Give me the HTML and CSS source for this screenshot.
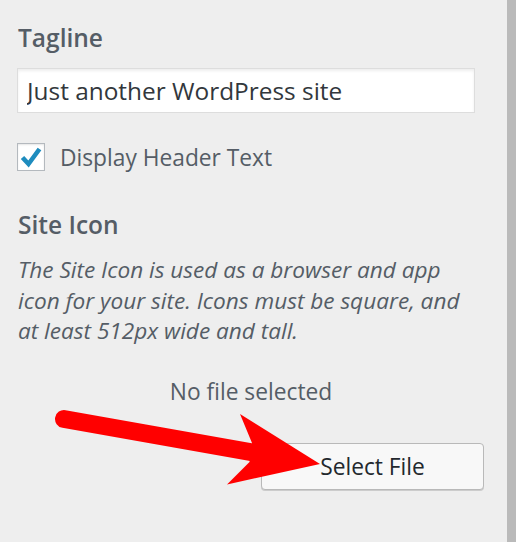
FILE: index.html
```html
<!DOCTYPE html>
<html lang="en">
<head>
<meta charset="utf-8">
<title>Site Identity</title>
<link rel="stylesheet" href="styles.css">
</head>
<body>
<div class="screen">
  <div class="panel">
    <div class="control">
      <label class="control-title" for="tagline">Tagline</label>
      <input class="text-input" id="tagline" type="text" value="Just another WordPress site">
    </div>
    <label class="check-row">
      <span class="checkbox">
        <svg viewBox="0 0 28 28" width="28" height="28" aria-hidden="true"><polyline points="5.5,14.5 11.5,21 22.5,6" fill="none" stroke="#1e8cbe" stroke-width="4.6" stroke-linejoin="miter" stroke-miterlimit="4"/></svg>
      </span>
      <span class="check-label">Display Header Text</span>
    </label>
    <div class="control site-icon">
      <div class="control-title">Site Icon</div>
      <p class="description">The Site Icon is used as a browser and app icon for your site. Icons must be square, and at least 512px wide and tall.</p>
      <div class="placeholder">No file selected</div>
      <div class="actions">
        <button class="button" type="button">Select File</button>
      </div>
    </div>
    <svg class="arrow" viewBox="0 0 516 542" width="516" height="542" aria-hidden="true">
      <line x1="64" y1="419" x2="253" y2="452.5" stroke="#ff0000" stroke-width="18" stroke-linecap="round"/>
      <polygon points="240,414 320,464 227,484.5 249.5,462 252,443" fill="#ff0000"/>
    </svg>
  </div>
  <div class="edge"></div>
</div>
</body>
</html>
```
FILE: styles.css
```css
html, body {
  margin: 0;
  padding: 0;
}
body {
  background: #eeeeee;
  font-family: "Open Sans", "Noto Sans", "Liberation Sans", sans-serif;
  color: #555d66;
}
.screen {
  display: flex;
  width: 516px;
  height: 542px;
  overflow: hidden;
}
.panel {
  position: relative;
  flex: 1;
  padding: 19px 0 0 17px;
  box-sizing: border-box;
}
.edge {
  width: 9px;
  background: #bababa;
}
.control {
  display: flex;
  flex-direction: column;
  align-items: flex-start;
}
.control-title {
  display: block;
  font-size: 24.5px;
  font-weight: 600;
  line-height: 36px;
  color: #555d66;
  padding-top: 1px;
  margin: 0 0 12px 1px;
}
.text-input {
  box-sizing: border-box;
  width: 458px;
  height: 45px;
  margin: 0;
  padding: 0 9px;
  border: 1px solid #dddddd;
  background: #ffffff;
  box-shadow: inset 0 2px 3px rgba(0, 0, 0, 0.07);
  font-family: "Open Sans", "Noto Sans", sans-serif;
  font-size: 24.4px;
  color: #32373c;
  outline: none;
}
.check-row {
  display: flex;
  align-items: center;
  gap: 15px;
  margin-top: 30px;
  height: 28px;
}
.checkbox {
  box-sizing: border-box;
  width: 28px;
  height: 28px;
  border: 1px solid #b4b9be;
  background: #ffffff;
  box-shadow: inset 0 1px 2px rgba(0, 0, 0, 0.1);
  position: relative;
}
.checkbox svg {
  position: absolute;
  left: -1px;
  top: -1px;
}
.check-label {
  font-size: 22.75px;
  line-height: 28px;
  padding-top: 2px;
  color: #555d66;
}
.site-icon {
  margin-top: 35px;
}
.site-icon .control-title {
  margin-bottom: 12px;
}
.description {
  margin: 0 0 0 1px;
  width: 450px;
  font-size: 22.6px;
  font-style: italic;
  line-height: 30.5px;
  color: #555d66;
}
.placeholder {
  align-self: stretch;
  width: 468px;
  margin-top: 29px;
  text-align: center;
  font-size: 22.75px;
  line-height: 32px;
  color: #555d66;
}
.actions {
  display: flex;
  justify-content: flex-end;
  width: 467px;
  margin-top: 35px;
}
.button {
  box-sizing: border-box;
  width: 223px;
  height: 47px;
  margin: 0;
  padding: 0;
  border: 1px solid #b9b9b9;
  border-radius: 4px;
  background: #f8f8f8;
  box-shadow: 0 1px 0 #cccccc;
  font-family: "Open Sans", "Noto Sans", sans-serif;
  font-size: 22.75px;
  color: #23282d;
}
.arrow {
  position: absolute;
  left: 0;
  top: 0;
  pointer-events: none;
}
```
